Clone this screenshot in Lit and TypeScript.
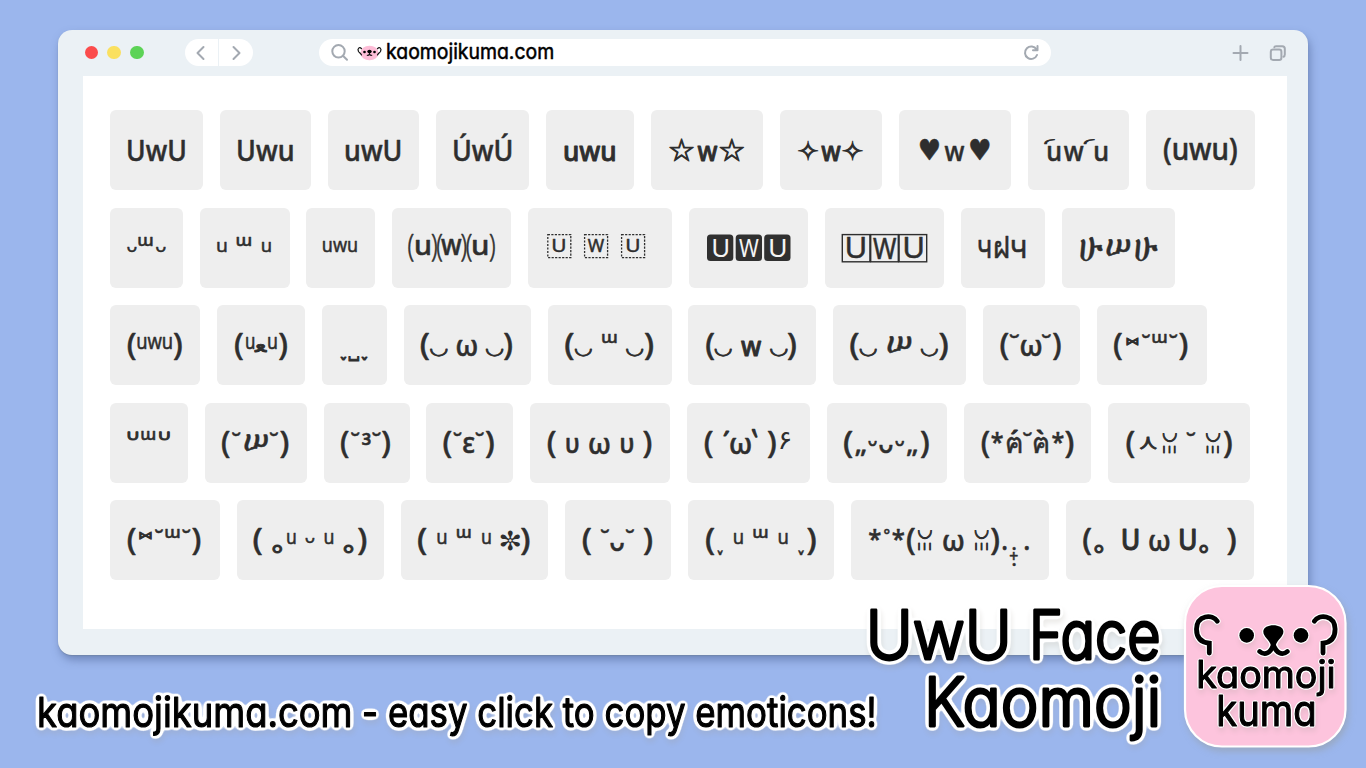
import { LitElement, html, svg, css } from "lit";
import { customElement, property } from "lit/decorators.js";

const FACE = `"Noto Sans", "DejaVu Sans", "Noto Sans CJK JP", sans-serif`;
const ROUND = `Inter, "Noto Sans", sans-serif`;

const ctx = document.createElement("canvas").getContext("2d")!;

interface InkOptions {
  family?: string;
  weight?: number;
  stroke?: number;
  fill?: string;
}

/** Draws a text run so that its ink fills the box x0..x1, y0..y1. */
function ink(t: string, x0: number, x1: number, y0: number, y1: number, o: InkOptions = {}) {
  const { family = FACE, weight = 500, stroke = 0.5, fill = "#2e2e2e" } = o;
  ctx.font = `${weight} 100px ${family}`;
  const m = ctx.measureText(t);
  const w = m.actualBoundingBoxLeft + m.actualBoundingBoxRight || 60;
  const h = m.actualBoundingBoxAscent + m.actualBoundingBoxDescent || 60;
  const sx = Math.max(0.5, x1 - x0 - stroke) / w;
  const sy = Math.max(0.5, y1 - y0 - stroke) / h;
  const tx = x0 + stroke / 2 + m.actualBoundingBoxLeft * sx;
  const ty = y0 + stroke / 2 + m.actualBoundingBoxAscent * sy;
  return svg`<text class=${family === ROUND ? "ink round" : "ink"} font-size="100" font-weight=${weight}
    transform="matrix(${sx} 0 0 ${sy} ${tx} ${ty})" fill=${fill} stroke=${fill}
    stroke-width=${stroke / Math.sqrt(sx * sy)}>${t}</text>`;
}

const inkStyles = css`
  .ink {
    font-family: "Noto Sans", "DejaVu Sans", "Noto Sans CJK JP", sans-serif;
    stroke-linejoin: round;
    white-space: pre;
  }
  .round {
    font-family: Inter, "Noto Sans", sans-serif;
    font-feature-settings: "cv11" 1;
  }
`;

type Run = [string, number, number, number, number, InkOptions?];
type Box = { kind: "dash" | "solid" | "line"; x: number; y: number; w: number; h: number };
interface Card {
  x: number;
  w: number;
  runs: Run[];
  boxes?: Box[];
}

const white = { fill: "#f4f4f4", stroke: 0, weight: 400 };
const thin = { stroke: 0.5, weight: 300 };
const bold = { weight: 500, stroke: 0.9 };
const light = { weight: 400, stroke: 0.5 };
const heavy = { stroke: 1 };

const L = (x: number, x1: number, y = 27.3): Run => ["(", x, x1, y, y + 27];
const R = (x: number, x1: number, y = 27.3): Run => [")", x, x1, y, y + 27];
const breve = (x: number, x1: number): Run => ["˘", x, x1, 28.8, 32.7];
const smile = (x: number, x1: number): Run => ["◡", x, x1, 43.2, 51.5, { stroke: 0.9 }];
const omega = (x: number, x1: number): Run => ["ω", x, x1, 34.2, 50.5];
const tri = (x: number, x1: number, y = 28.6): Run => ["ᵚ", x, x1, y, y + 9.3];
const sup = (x: number, x1: number, y0 = 32.2, y1 = 43.5): Run => ["ᵘ", x, x1, y0, y1, light];
const ring = (x: number, x1: number): Run => ["｡", x, x1, 43.3, 52.6, heavy];
const cup = (x: number, x1: number): Run => ["◡", x, x1, 28.9, 38.3, { stroke: 0.9 }];
const bars = (x: number, x1: number): Run => ["|||", x, x1, 41.3, 50.3, { weight: 400, stroke: 1 }];
const star = (x: number, x1: number): Run => ["*", x, x1, 28, 40];

const ROWS: Card[][] = [
  [
    { x: 110, w: 93, runs: [["UwU", 128, 184.7, 29.3, 51]] },
    { x: 220, w: 91, runs: [["Uwu", 238, 292.7, 29.3, 51]] },
    { x: 328, w: 91, runs: [["uwU", 345.7, 400.3, 29.3, 51]] },
    { x: 435.5, w: 93.5, runs: [["ÚwÚ", 453.3, 510.7, 22.7, 51]] },
    { x: 546, w: 88, runs: [["uwu", 564.3, 615, 35.3, 51, bold]] },
    { x: 651, w: 112, runs: [["☆", 669, 694, 27.3, 51, heavy], ["w", 697.3, 717.7, 35.3, 50.7, bold], ["☆", 719.3, 744.3, 27.3, 51, heavy]] },
    { x: 780, w: 102, runs: [["✧", 797.7, 818.3, 30, 50.7, heavy], ["w", 821, 841, 35.3, 50.7, bold], ["✧", 842, 863, 30, 50.7, heavy]] },
    { x: 898.5, w: 112.5, runs: [["♥", 919, 938.5, 28.5, 50], ["w", 944, 964, 35.3, 50.7], ["♥", 969.3, 989, 28.5, 50]] },
    { x: 1028, w: 100.5, runs: [["◜", 1044.3, 1055, 28.3, 34, heavy], ["u", 1047.7, 1060.3, 35.3, 51], ["w", 1063.7, 1083.7, 35.3, 50.7], ["◜", 1083.7, 1094.7, 28.3, 34, heavy], ["u", 1094.7, 1107.3, 35.3, 51]] },
    { x: 1145.5, w: 109, runs: [["(uwu)", 1163.3, 1236.7, 27.7, 55]] },
  ],
  [
    { x: 110, w: 73, runs: [["ᵕ", 127, 136.7, 38, 43.7, light], tri(138.3, 152.7, 29), ["ᵕ", 155.7, 165.7, 38, 43.7, light]] },
    { x: 200, w: 89.5, runs: [sup(217.3, 226.7, 33, 43.7), tri(236.7, 251.3, 29), sup(262, 271, 33, 43.7)] },
    { x: 306.3, w: 69, runs: [["ᵘʷᵘ", 323.3, 357.3, 32, 43.7, light]] },
    { x: 392, w: 119, runs: [["(", 408.3, 413.9, 26, 53, thin], ["u", 415.7, 430, 31.3, 47], [")", 431.5, 437, 26, 53, thin], ["(", 437, 442.5, 26, 53, thin], ["w", 441, 461.7, 31.3, 47], [")", 461, 466.5, 26, 53, thin], ["(", 466.5, 472, 26, 53, thin], ["u", 472.7, 487.3, 31.3, 47], [")", 489.5, 495, 26, 53, thin]] },
    {
      x: 528, w: 144.3,
      boxes: [547.8, 584.6, 621.6].map((x) => ({ kind: "dash", x, y: 26, w: 23, h: 23 }) as Box),
      runs: [["U", 553, 565, 30.3, 43.9, light], ["W", 587.7, 604.3, 30.3, 43.7, light], ["U", 627, 639, 30.3, 43.9, light]],
    },
    {
      x: 689, w: 119.5,
      boxes: [707, 735.7, 764.2].map((x) => ({ kind: "solid", x, y: 26, w: 26.3, h: 26.3 }) as Box),
      runs: [["U", 713.5, 727.8, 29.7, 48.5, white], ["W", 739.3, 758.7, 29.7, 48.3, white], ["U", 770.5, 785.3, 29.7, 48.5, white]],
    },
    {
      x: 825.3, w: 119.2,
      boxes: [842.6, 871, 899.4].map((x) => ({ kind: "line", x, y: 26, w: 27.6, h: 27.2 }) as Box),
      runs: [["U", 847.3, 865, 29, 50.3, light], ["W", 873.3, 896.7, 29, 50.3, light], ["U", 905, 922.7, 29, 50.3, light]],
    },
    { x: 961.5, w: 83.5, runs: [["ч", 979, 991, 32, 50, light], ["ฝ", 995.7, 1009.3, 27, 50], ["ч", 1012.3, 1026, 32, 50, light]] },
    { x: 1062, w: 113.5, runs: [["ሁ", 1080.3, 1102.7, 28.7, 53], ["ሠ", 1106.7, 1130.7, 31.3, 48], ["ሁ", 1135, 1157.3, 28.7, 53]] },
  ],
  [
    { x: 110, w: 90, runs: [L(127.7, 136), ["ᵘʷᵘ", 137.3, 172, 31.8, 43.8, light], R(173.7, 182)] },
    { x: 217, w: 88, runs: [L(235, 243.3), sup(246, 254.3, 31.8, 43.8), ["ﻌ", 254.3, 267.3, 37.5, 46.5, heavy], sup(268, 276.7, 31.8, 43.8), R(279, 287.3)] },
    { x: 322.3, w: 64.7, runs: [["ˬ", 340.7, 347, 50.5, 54.8, heavy], ["˽", 348.7, 359.7, 50.5, 56.2, heavy], ["ˬ", 361.7, 368, 50.5, 54.8, heavy]] },
    { x: 404, w: 127, runs: [L(420.7, 429.3), smile(430, 448), omega(456.7, 477), smile(485.7, 503.7), R(504, 512.3)] },
    { x: 548, w: 124, runs: [L(565.3, 574), smile(574.7, 592.3), tri(602, 616.7), smile(626, 643.7), R(644.7, 653.3)] },
    { x: 688.5, w: 127.5, runs: [L(706.7, 715), smile(715, 732.7), ["w", 741.3, 762, 34.8, 50.5, bold], smile(770.3, 788.3), R(788.3, 796.7)] },
    { x: 833, w: 133.5, runs: [L(850.3, 859), smile(859.3, 877), ["ሠ", 887.7, 911.7, 31.2, 47.8], smile(920.7, 938.3), R(939.3, 948)] },
    { x: 983.3, w: 96.5, runs: [L(1000.7, 1009), breve(1010, 1019.7), omega(1021, 1041.7), breve(1042, 1051.3), R(1053.3, 1061.3)] },
    { x: 1097, w: 109.7, runs: [L(1114, 1122.3), ["⋈", 1126.3, 1138.3, 31.5, 40.2, heavy], breve(1142, 1150.3), tri(1152.3, 1166.7), breve(1169.3, 1177.7), R(1179.3, 1187.7)] },
  ],
  [
    { x: 110, w: 78, runs: [["∪", 127.3, 138, 27.7, 37, heavy], tri(141.3, 155.3, 27.9), ["∪", 159, 169.7, 27.7, 37, heavy]] },
    { x: 205, w: 102, runs: [L(222, 230), breve(232, 240.7), ["ሠ", 244, 267.7, 31, 47.7], breve(269.7, 278.3), R(280.3, 288.7)] },
    { x: 324, w: 85.5, runs: [L(341, 349), breve(351, 359.7), ["³", 362, 370.7, 28.7, 41.7], breve(372.3, 381), R(382, 390.3)] },
    { x: 426.3, w: 86.7, runs: [L(443.7, 452), breve(453.7, 462), ["ε", 463.3, 474.7, 34, 50.3], breve(475.7, 484.3), R(486, 494.3)] },
    { x: 530, w: 139.8, runs: [L(547.7, 556), ["υ", 566.3, 578.7, 34.7, 50.3], omega(589.3, 609.7), ["υ", 620.7, 633.3, 34.7, 50.3], R(643.3, 651.7)] },
    { x: 687, w: 123, runs: [L(704.7, 713), ["´", 723.3, 729.3, 27.3, 33.3, heavy], omega(730.3, 751), ["`", 751.7, 757.7, 26.3, 34.7, heavy], R(767.7, 776), ["۶", 780.3, 790, 28.7, 45.7, { stroke: 0, weight: 400 }]] },
    { x: 827, w: 120, runs: [L(844, 852.7), ["„", 855.3, 866, 45.7, 52.7], ["ᵕ", 868.3, 877, 37.3, 43], ["ᴗ", 879.3, 892.7, 41.7, 50.3], ["ᵕ", 895.3, 904.3, 37.3, 43], ["„", 906.7, 917.3, 45.7, 52.7], R(920.7, 929)] },
    { x: 964, w: 127, runs: [L(981.7, 989.7), star(991.3, 1003), ["ฅ", 1006.3, 1021, 33.5, 50.3], ["´", 1011, 1018, 26, 31, heavy], breve(1023, 1032), ["ฅ", 1033.3, 1047.7, 33.5, 50.3], ["`", 1036.5, 1043.5, 26, 31, heavy], star(1052, 1063.7), R(1065.3, 1073.7)] },
    { x: 1108.3, w: 141.7, runs: [L(1126.7, 1135), ["人", 1140, 1157.3, 33, 46.3, heavy], cup(1162.7, 1177.3), bars(1163.3, 1176), breve(1186.7, 1195.7), cup(1206, 1220.7), bars(1206.7, 1219.3), R(1224, 1232.3)] },
  ],
  [
    { x: 110, w: 109.7, runs: [L(127.7, 136), ["⋈", 139.3, 151.7, 31.2, 39.8, heavy], breve(155, 163.3), tri(165.3, 179.7), breve(182.3, 190.7), R(192.3, 200.7)] },
    { x: 236.7, w: 147.3, runs: [L(253.3, 262), ring(272, 282), sup(286.7, 295.3), ["ᵕ", 305, 314.3, 37.2, 42.8, light], sup(324.3, 333), ring(343.3, 353.3), R(357.7, 366.3)] },
    { x: 401.2, w: 146.8, runs: [L(418.3, 427), sup(437.7, 446.7), tri(457, 471), sup(482.3, 491), ["✼", 500.7, 520, 29.5, 49.5, { stroke: 0, weight: 400 }], R(521.3, 530)] },
    { x: 565, w: 106, runs: [L(582.7, 591.3), breve(600.7, 609.3), ["ᴗ", 610.3, 624, 41.8, 50.5], breve(625.7, 634.3), R(643.7, 652.3)] },
    { x: 687.7, w: 146, runs: [L(705.7, 714.3), ["ˬ", 717, 722.7, 50.2, 55], sup(733.7, 742.7), tri(753, 767.3), sup(778.3, 787.3), ["ˬ", 797.7, 803.7, 50.2, 55], R(807, 815.7)] },
    { x: 850.7, w: 198, runs: [star(868.3, 880.3), ["°", 883.7, 889.3, 28.5, 33.8], star(892, 904), L(906.7, 915), cup(917.3, 931.7), bars(917.7, 930.7), omega(943, 963.3), cup(974, 988.3), bars(974.7, 987.7), R(990.7, 999), [".", 1002.3, 1006.5, 45.6, 50.2], [".", 1012, 1015.4, 46.5, 50], ["+", 1009.3, 1017.5, 51.8, 60.2], [".", 1012, 1015.4, 62.8, 66.2], [".", 1024.2, 1028.6, 45.6, 50.2]] },
    { x: 1065.7, w: 188, runs: [L(1083, 1091.3), ring(1094, 1103.3), ["U", 1122, 1138, 28.8, 50.5, bold], omega(1149, 1169.3), ["U", 1179.3, 1195.3, 28.8, 50.5, bold], ring(1199, 1208), R(1227, 1235.7)] },
  ],
];

@customElement("kaomoji-card")
class KaomojiCard extends LitElement {
  @property({ attribute: false }) card!: Card;

  static styles = [
    inkStyles,
    css`
      :host {
        display: block;
        height: 80px;
        border-radius: 6px;
        background: #eeeeee;
        flex: none;
      }
      svg {
        display: block;
        width: 100%;
        height: 80px;
        overflow: visible;
      }
      .dash {
        fill: none;
        stroke: #2e2e2e;
        stroke-width: 1.3;
        stroke-dasharray: 2.2 1.3;
      }
      .line {
        fill: none;
        stroke: #2e2e2e;
        stroke-width: 1.4;
      }
      .solid {
        fill: #303030;
      }
    `,
  ];

  render() {
    const { x, w, runs, boxes = [] } = this.card;
    return html`<svg viewBox="${x} -0.6 ${w} 80">
      ${boxes.map((b) => svg`<rect class=${b.kind} x=${b.x} y=${b.y} width=${b.w} height=${b.h} rx=${b.kind === "solid" ? 3.5 : 0} />`)}
      ${runs.map((r) => ink(...r))}
    </svg>`;
  }
}

const halo = (id: string, blur: number, slope: number, cut: number) => svg`
  <filter id=${id} x="-10%" y="-30%" width="120%" height="160%" color-interpolation-filters="sRGB">
    <feGaussianBlur in="SourceAlpha" stdDeviation=${blur} />
    <feComponentTransfer result="edge"><feFuncA type="linear" slope=${slope} intercept=${cut} /></feComponentTransfer>
    <feFlood flood-color="#fff" />
    <feComposite in2="edge" operator="in" result="outline" />
    <feGaussianBlur in="edge" stdDeviation="2.5" />
    <feOffset dx="1" dy="4" />
    <feComponentTransfer result="shade"><feFuncA type="linear" slope="0.2" /></feComponentTransfer>
    <feFlood flood-color="#a09a90" />
    <feComposite in2="shade" operator="in" result="shadow" />
    <feMerge><feMergeNode in="shadow" /><feMergeNode in="outline" /><feMergeNode in="SourceGraphic" /></feMerge>
  </filter>`;

const bearFace = svg`
  <g fill="none" stroke="#000" stroke-width="4.800" stroke-linecap="round">
    <path d="M1217.3 621.3C1212.5 613.6 1197 615 1196.5 629C1196.5 638.500 1201.500 642.500 1209.300 643.200V653" />
    <path d="M1314.300 621.300C1319.100 613.600 1334.600 615 1335.100 629C1335.100 638.500 1330.100 642.500 1323 643.200V653" />
    <path d="M1259.700 651.500C1265 656 1270.500 653 1273.300 645C1276.500 653 1282 656 1287.300 651.500" />
  </g>
  <circle cx="1246.700" cy="635.400" r="7.300" />
  <circle cx="1301" cy="635.400" r="7.300" />
  <path d="M1263.300 631.500C1263.300 623 1283.400 623 1283.400 631.500C1283.400 637 1277.500 639 1275.500 646H1271.200C1269.200 639 1263.300 637 1263.300 631.500Z" />`;

const TAGLINE: [string, number, number, number, number][] = [
  ["kaomojikuma.com", 39, 347.5, 695.3, 736.7],
  ["- easy click to copy emoticons!", 364, 873, 695.3, 736.7],
];

@customElement("app-root")
class AppRoot extends LitElement {
  static styles = [
    inkStyles,
    css`
      :host {
        display: block;
        position: relative;
        box-sizing: border-box;
        width: 1366px;
        height: 768px;
        padding: 30px 58px;
        overflow: hidden;
        background: #9bb6ed;
      }
      .window {
        box-sizing: border-box;
        height: 625px;
        padding: 0 21px 26px 24.5px;
        border-radius: 14px;
        background: #ebf1f5;
        box-shadow: 0 1px 1px rgba(110, 130, 160, 0.6), 2px 5px 9px rgba(70, 90, 140, 0.5);
        display: flex;
        flex-direction: column;
      }
      .bar {
        height: 45px;
        margin-bottom: 1px;
        display: flex;
        align-items: center;
      }
      .dots {
        display: flex;
        gap: 9.2px;
        margin-left: 2.2px;
      }
      .dot {
        width: 13.6px;
        height: 13.6px;
        border-radius: 50%;
      }
      .red {
        background: #fb4c4c;
      }
      .yellow {
        background: #fae05f;
      }
      .green {
        background: #5cd356;
      }
      .nav {
        display: flex;
        gap: 1.5px;
        margin-left: 40.8px;
      }
      .nav span {
        width: 33.2px;
        height: 27px;
        background: #fff;
        display: grid;
        place-items: center;
      }
      .back {
        border-radius: 14px 0 0 14px;
      }
      .next {
        border-radius: 0 14px 14px 0;
      }
      .search {
        width: 732.5px;
        height: 27px;
        margin-left: 66px;
        border-radius: 14px;
        background: #fff;
      }
      .search svg,
      .tools svg {
        display: block;
      }
      .tools {
        margin-left: 179.5px;
      }
      .glyph {
        fill: none;
        stroke: #a3a9b1;
        stroke-width: 2;
        stroke-linecap: round;
        stroke-linejoin: round;
      }
      .page {
        flex: 1;
        background: #fff;
        padding: 34.3px 0 0 27.5px;
        display: flex;
        flex-direction: column;
        gap: 17.5px;
      }
      .row {
        display: flex;
      }
      .overlay {
        position: absolute;
        inset: 0;
        width: 1366px;
        height: 768px;
      }
      .badge {
        fill: #fdc4dd;
        stroke: #fff;
        stroke-width: 2.2;
      }
      .cast {
        filter: drop-shadow(2px 4px 3px rgba(150, 155, 155, 0.5));
      }
    `,
  ];

  render() {
    const title = { family: ROUND, weight: 300, stroke: 2.8, fill: "#000" };
    const caption = { ...title, weight: 400, stroke: 1.1 };
    return html`
      <div class="window">
        <div class="bar">
          <div class="dots">
            <span class="dot red"></span><span class="dot yellow"></span><span class="dot green"></span>
          </div>
          <div class="nav">
            <span class="back"><svg class="glyph" width="14" height="16"><path d="M9.500 2L3.500 8L9.500 14" /></svg></span>
            <span class="next"><svg class="glyph" width="14" height="16"><path d="M4.500 2L10.500 8L4.500 14" /></svg></span>
          </div>
          <div class="search">
            <svg width="732.5" height="27" viewBox="318.500 39 732.500 27">
              <g class="glyph">
                <circle cx="338" cy="51.300" r="6.200" />
                <path d="M342.700 56L346.500 59.700" />
                <path d="M1036 49.500A6.200 6.200 0 1 0 1036.500 55M1037 46V50.200H1032.500" />
              </g>
              <ellipse cx="369" cy="53" rx="9" ry="7.300" fill="#fdbdd7" />
              <g fill="none" stroke="#111" stroke-width="1.200" stroke-linecap="round">
                <path d="M361 48.700C359 46.500 356.500 48.500 358 51.500C359 53 360.500 53.500 361 55" />
                <path d="M377 48.700C379 46.500 381.500 48.500 380 51.500C379 53 377.500 53.500 377 55" />
                <path d="M366.800 55.300Q368.300 55.800 369 54Q369.700 55.800 371.200 55.300" />
              </g>
              <circle cx="364" cy="52" r="1.300" />
              <circle cx="374" cy="52" r="1.300" />
              <ellipse cx="369" cy="51.600" rx="2.200" ry="1.800" />
              ${ink("kaomojikuma.com", 386.7, 551, 42, 63.5, { ...caption, stroke: 0.5 })}
            </svg>
          </div>
          <div class="tools">
            <svg class="glyph" width="56" height="20" viewBox="1231 42.500 56 20">
              <path d="M1240.500 45.500V59.500M1233.500 52.500H1247.500" />
              <rect x="1270.800" y="49" width="10.600" height="10.400" rx="2.200" />
              <path d="M1274.300 46.800Q1274.500 45.800 1276 45.800H1282.300Q1284.800 45.800 1284.800 48.300V54Q1284.800 55.800 1283.500 56.200" />
            </svg>
          </div>
        </div>
        <div class="page">
          ${ROWS.map(
            (row) => html`<div class="row">
              ${row.map((c, i) => {
                const gap = i ? c.x - row[i - 1].x - row[i - 1].w : 0;
                return html`<kaomoji-card .card=${c} style="width:${c.w}px;margin-left:${gap}px"></kaomoji-card>`;
              })}
            </div>`
          )}
        </div>
      </div>
      <svg class="overlay" viewBox="0 0 1366 768">
        <defs>${halo("wide", 2.8, 14, -0.6)}${halo("narrow", 1.2, 7, -0.5)}</defs>
        <g filter="url(#wide)">
          ${ink("UwU", 870, 1007.7, 608.3, 661, title)}
          ${ink("Face", 1032.7, 1157, 608.3, 661, title)}
          ${ink("Kaomoji", 928.2, 1158, 674, 741.7, title)}
        </g>
        <g filter="url(#wide)">
          ${TAGLINE.map((w) => ink(...w, caption))}
        </g>
        <g class="cast"><rect class="badge" x="1185" y="586" width="160.500" height="160.500" rx="37" /></g>
        <g filter="url(#narrow)">
          ${bearFace}
          ${ink("kaomoji", 1198.3, 1333.3, 658.3, 696, caption)}
          ${ink("kuma", 1218.3, 1312.5, 694, 726.7, caption)}
        </g>
      </svg>
    `;
  }
}
